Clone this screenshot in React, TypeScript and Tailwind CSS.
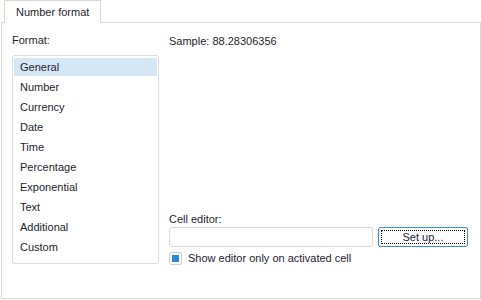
const formats = [
  "General",
  "Number",
  "Currency",
  "Date",
  "Time",
  "Percentage",
  "Exponential",
  "Text",
  "Additional",
  "Custom",
];

export default function App() {
  return (
    <div
      className="flex h-[300px] w-[481px] flex-col bg-white text-[11px] leading-[13px] text-[#1e1e2e]"
      style={{ fontFamily: '"Liberation Sans", Arial, sans-serif' }}
    >
      {/* tab strip */}
      <div className="flex pl-[4px]">
        <div className="relative z-10 -mb-px h-[23px] w-[97px] border border-b-0 border-[#d9d9d3] bg-white pl-[11px] pt-[5px]">
          Number format
        </div>
      </div>

      {/* tab page */}
      <div className="ml-px flex h-[277px] w-[480px] border border-[#d9d9d3] pb-[33px] pl-[10px]">
        <div className="flex flex-col pt-[11px]">
          <div>Format:</div>
          <div className="mt-[8px] flex h-[209px] w-[147px] flex-col gap-[2px] rounded-[3px] border border-[#dcdcdc] px-px pt-[2px]">
            {formats.map((f, i) => (
              <div
                key={f}
                className={
                  "flex h-[18px] items-center pl-[6px] " +
                  (i === 0 ? "bg-[#d5e6f4]" : "")
                }
              >
                {f}
              </div>
            ))}
          </div>
        </div>

        <div className="ml-[10px] flex flex-1 flex-col pt-[12px]">
          <div>Sample: 88.28306356</div>

          <div className="mt-auto">
            <div className="-mt-px mb-px">Cell editor:</div>
            <div className="flex">
              <div className="h-[20px] w-[204px] rounded-[3px] border border-[#dadada] bg-white" />
              <button className="relative ml-[5px] h-[20px] w-[90px] rounded-[2px] border border-[#3d8ed6] bg-[#fdfdfd] text-[11px] text-[#1e1e2e]">
                <span className="absolute inset-[2px] border border-dotted border-black" />
                Set up...
              </button>
            </div>
            <div className="mt-[5px] flex items-center">
              <div className="flex h-[13px] w-[13px] items-center justify-center rounded-[2px] border border-[#cfcfcf] bg-white">
                <div className="h-[7px] w-[7px] bg-[#2b87d6]" />
              </div>
              <span className="ml-[6px]">Show editor only on activated cell</span>
            </div>
          </div>
        </div>
      </div>
    </div>
  );
}
